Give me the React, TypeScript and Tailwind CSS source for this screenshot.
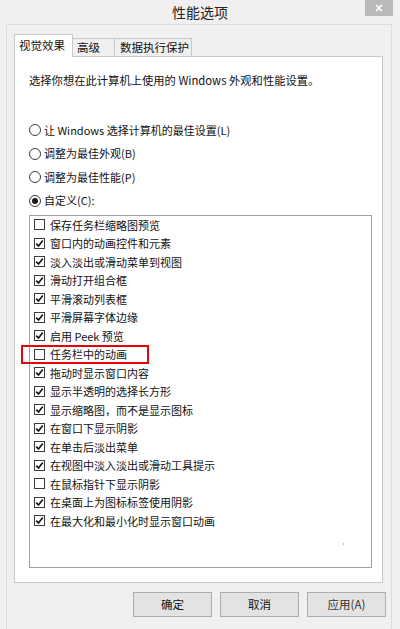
import React from "react";

const items = [
  { label: "保存任务栏缩略图预览", checked: false },
  { label: "窗口内的动画控件和元素", checked: true },
  { label: "淡入淡出或滑动菜单到视图", checked: true },
  { label: "滑动打开组合框", checked: true },
  { label: "平滑滚动列表框", checked: true },
  { label: "平滑屏幕字体边缘", checked: true },
  { label: "启用 Peek 预览", checked: true },
  { label: "任务栏中的动画", checked: false, marked: true },
  { label: "拖动时显示窗口内容", checked: true },
  { label: "显示半透明的选择长方形", checked: true },
  { label: "显示缩略图，而不是显示图标", checked: true },
  { label: "在窗口下显示阴影", checked: true },
  { label: "在单击后淡出菜单", checked: true },
  { label: "在视图中淡入淡出或滑动工具提示", checked: true },
  { label: "在鼠标指针下显示阴影", checked: false },
  { label: "在桌面上为图标标签使用阴影", checked: true },
  { label: "在最大化和最小化时显示窗口动画", checked: true },
];

const radios = [
  { label: "让 Windows 选择计算机的最佳设置(L)", selected: false },
  { label: "调整为最佳外观(B)", selected: false },
  { label: "调整为最佳性能(P)", selected: false },
  { label: "自定义(C):", selected: true },
];

function Radio({ selected }: { selected: boolean }) {
  return (
    <span className="w-[12px] h-[12px] rounded-full border border-[#3c3c3c] bg-white flex items-center justify-center shrink-0">
      {selected && <span className="w-[6px] h-[6px] rounded-full bg-[#1a1a1a]" />}
    </span>
  );
}

function Check({ checked }: { checked: boolean }) {
  return (
    <span className="w-[11px] h-[11px] border border-[#3c3c3c] bg-white flex items-center justify-center shrink-0">
      {checked && (
        <svg width="9" height="9" viewBox="0 0 9 9">
          <path d="M1.2 4.6 L3.5 7 L7.8 1.6" fill="none" stroke="#111" strokeWidth="1.6" />
        </svg>
      )}
    </span>
  );
}

export default function App() {
  return (
    <div
      className="w-[400px] h-[629px] bg-[#f0f0f0] text-[#111] overflow-hidden flex flex-col"
      style={{ fontFamily: '"Noto Sans CJK SC", "Noto Sans", sans-serif' }}
    >
      {/* Title bar */}
      <div className="relative h-[24px] shrink-0 flex items-center justify-center">
        <span className="text-[14px] text-[#222] leading-none">性能选项</span>
        <div className="absolute right-[7px] top-0 w-[28px] h-[16px] bg-[#b9b9b9] flex items-center justify-center">
          <svg width="8" height="8" viewBox="0 0 8 8">
            <path d="M1 1 L7 7 M7 1 L1 7" stroke="#fff" strokeWidth="1.6" />
          </svg>
        </div>
      </div>

      {/* Frame */}
      <div className="flex-1 mx-[6px] mr-[8px] border-t border-l border-r border-[#dcdcdc] flex flex-col pl-[7px] pr-[8px]">
        {/* Tabs */}
        <div className="flex items-end h-[31px] shrink-0 text-[11.5px]">
          <div className="relative z-10 w-[59px] h-[23px] bg-white border border-b-0 border-[#c8c8c8] flex items-center pl-[4px] -mb-px">
            视觉效果
          </div>
          <div className="w-[42px] h-[18px] bg-[#f0f0f0] border border-l-0 border-b-0 border-[#c8c8c8] flex items-center pl-[4px]">
            高级
          </div>
          <div className="w-[77px] h-[18px] bg-[#f0f0f0] border border-l-0 border-b-0 border-[#c8c8c8] flex items-center pl-[5px]">
            数据执行保护
          </div>
        </div>

        {/* Panel */}
        <div className="h-[527px] bg-white border border-[#c8c8c8] flex flex-col pl-[14px] pr-[10px] text-[11px]">
          <p className="mt-[15px] h-[16px] leading-[16px] whitespace-nowrap text-[11.3px]">
            选择你想在此计算机上使用的 Windows 外观和性能设置。
          </p>

          <div className="mt-[34px] flex flex-col gap-[7.5px]">
            {radios.map((r) => (
              <div key={r.label} className="flex items-center gap-[3px] h-[16px] whitespace-nowrap">
                <Radio selected={r.selected} />
                <span>{r.label}</span>
              </div>
            ))}
          </div>

          <div className="mt-[6px] h-[353px] border border-[#9f9f9f] bg-white flex flex-col">
            {items.map((it) => (
              <div key={it.label} className="relative h-[18.5px] flex items-center gap-[5px] pl-[4px] whitespace-nowrap">
                <Check checked={it.checked} />
                <span>{it.label}</span>
                {it.marked && (
                  <div className="absolute left-[-9px] top-[0px] w-[128px] h-[19px] border-2 border-[#e8000b]" />
                )}
              </div>
            ))}
            <div className="flex-1 flex justify-end items-end pr-[27px] pb-[22px]">
              <span className="w-px h-[2px] bg-[#bbb]" />
            </div>
          </div>
        </div>

        {/* Buttons */}
        <div className="flex justify-end gap-[8px] mt-[9px] text-[11.5px] mr-[-3px]">
          <button className="w-[79px] h-[25px] bg-[#e3e3e3] border border-[#adadad]">确定</button>
          <button className="w-[79px] h-[25px] bg-[#e3e3e3] border border-[#adadad]">取消</button>
          <button className="w-[79px] h-[25px] bg-[#e3e3e3] border border-[#adadad] text-[#333]">应用(A)</button>
        </div>
      </div>
    </div>
  );
}
